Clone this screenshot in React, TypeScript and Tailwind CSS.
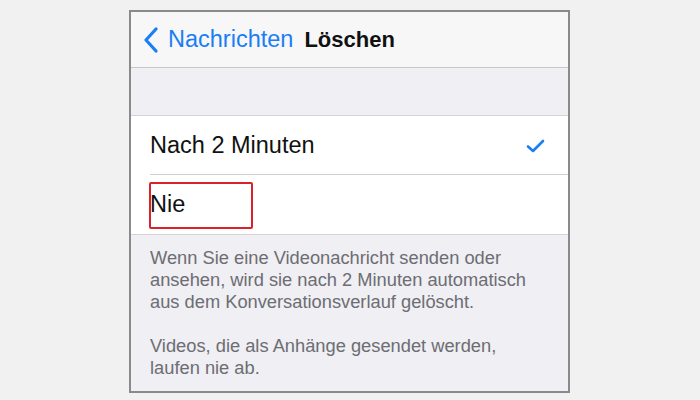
import React from 'react';

const App: React.FC = () => {
  return (
    <div className="w-[700px] h-[400px] bg-[#f1f1f1] pt-[10px] pl-[129px] font-['Liberation_Sans',Arial,sans-serif]">
      <div className="w-[441px] h-[383px] border-2 border-[#8a8a8a] bg-[#efeff4] flex flex-col overflow-hidden">
        {/* Nav bar */}
        <div className="h-[56px] bg-[#f7f7f8] border-b border-[#c8c7cc] flex items-center pl-[12px] shrink-0">
          <svg width="16" height="26" viewBox="0 0 16 26" className="mr-[9px]">
            <path d="M13 2 L3 13 L13 24" fill="none" stroke="#1a7ef5" strokeWidth="3.2" strokeLinecap="round" strokeLinejoin="round" />
          </svg>
          <span className="text-[23.5px] text-[#1a7ef5] leading-none">Nachrichten</span>
          <span className="text-[22px] font-bold text-[#111] leading-none ml-[11px]">Löschen</span>
        </div>

        {/* Section spacer */}
        <div className="h-[48px] shrink-0 border-b border-[#d4d4d8]" />

        {/* Options */}
        <div className="bg-white shrink-0">
          <div className="h-[59px] flex items-center pl-[19px] pr-[22px] relative">
            <span className="text-[23.5px] text-[#111]">Nach 2 Minuten</span>
            <svg width="20" height="16" viewBox="0 0 20 16" className="ml-auto">
              <path d="M2 8.5 L7 13 L17 3" fill="none" stroke="#1a7ef5" strokeWidth="2.6" strokeLinecap="round" strokeLinejoin="round" />
            </svg>
            <div className="absolute left-[19px] right-0 bottom-0 h-px bg-[#d0d0d4]" />
          </div>
          <div className="h-[60px] flex items-center pl-[19px] relative border-b border-[#d4d4d8]">
            <span className="text-[23.5px] text-[#111]">Nie</span>
            <div className="absolute left-[18px] top-[7px] w-[104px] h-[47px] border-2 border-[#d9232b] rounded-[2px]" />
          </div>
        </div>

        {/* Footer */}
        <div className="pl-[19px] pr-[24px] pt-[12px] text-[18.3px] leading-[22px] text-[#6d6d72]">
          <p>Wenn Sie eine Videonachricht senden oder ansehen, wird sie nach 2 Minuten automatisch aus dem Konversationsverlauf gelöscht.</p>
          <p className="mt-[22px]">Videos, die als Anhänge gesendet werden, laufen nie ab.</p>
        </div>
      </div>
    </div>
  );
};

export default App;
